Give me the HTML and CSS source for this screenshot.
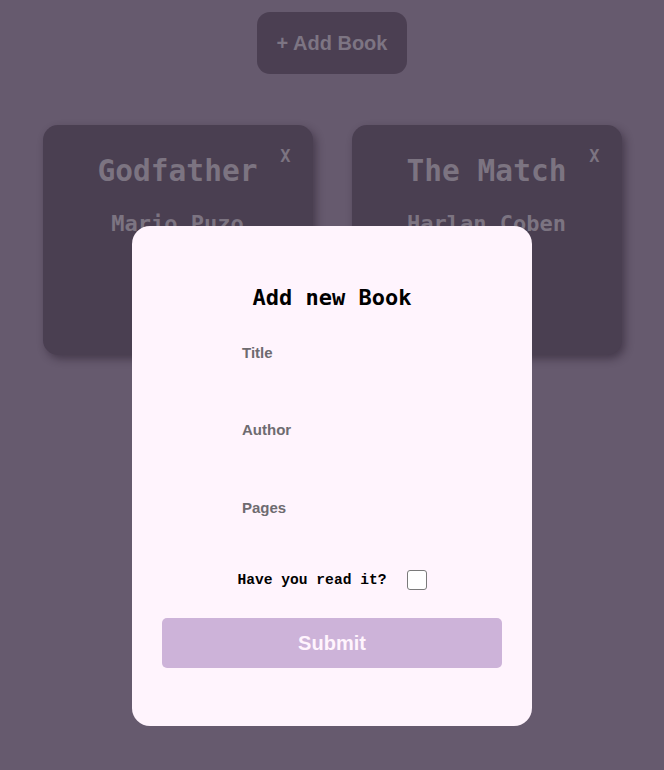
FILE: index.html
```html
<!DOCTYPE html>
<html lang="en">
<head>
<meta charset="utf-8">
<title>Library</title>
<link rel="stylesheet" href="styles.css">
</head>
<body>
  <header class="top">
    <button class="add-btn" type="button">+ Add Book</button>
  </header>
  <main class="books">
    <article class="card">
      <button class="close" type="button">X</button>
      <h2 class="card-title">Godfather</h2>
      <p class="card-author">Mario Puzo</p>
    </article>
    <article class="card">
      <button class="close" type="button">X</button>
      <h2 class="card-title">The Match</h2>
      <p class="card-author">Harlan Coben</p>
    </article>
  </main>
  <div class="modal">
    <h1 class="modal-title">Add new Book</h1>
    <form class="form">
      <div class="fields">
        <div class="field">
          <label class="label" for="title">Title</label>
          <input class="input" id="title" type="text">
        </div>
        <div class="field">
          <label class="label" for="author">Author</label>
          <input class="input" id="author" type="text">
        </div>
        <div class="field field-last">
          <label class="label" for="pages">Pages</label>
          <input class="input" id="pages" type="text">
        </div>
      </div>
      <div class="read-row">
        <span class="read-label">Have you read it?</span>
        <span class="checkbox"></span>
      </div>
      <button class="submit" type="button">Submit</button>
    </form>
  </div>
</body>
</html>
```
FILE: styles.css
```css
html, body {
  margin: 0;
  padding: 0;
}
body {
  background: #665a6e;
  min-height: 770px;
  font-family: "Liberation Sans", Arial, sans-serif;
}
.top {
  display: flex;
  justify-content: center;
  padding-top: 12px;
}
.add-btn {
  width: 150px;
  height: 62px;
  border: none;
  border-radius: 13px;
  background: #4b3f52;
  color: #7d7583;
  font-family: "Liberation Sans", Arial, sans-serif;
  font-weight: bold;
  font-size: 20px;
  padding: 0;
}
.books {
  display: flex;
  justify-content: center;
  gap: 39px;
  margin-top: 51px;
}
.card {
  position: relative;
  width: 270px;
  height: 230px;
  box-sizing: border-box;
  background: #4a3f51;
  border-radius: 15px;
  box-shadow: 3px 4px 8px rgba(30, 20, 35, 0.45);
  padding-top: 29px;
  text-align: center;
  font-family: "DejaVu Sans Mono", monospace;
  color: #7c7481;
}
.card-title {
  margin: 0;
  font-size: 29.5px;
  line-height: 35px;
  font-weight: bold;
}
.card-author {
  margin: 22px 0 0;
  font-size: 22px;
  line-height: 26px;
  font-weight: bold;
}
.close {
  position: absolute;
  top: 21px;
  right: 22px;
  border: none;
  background: none;
  padding: 0;
  font-family: "DejaVu Sans Mono", monospace;
  font-weight: bold;
  font-size: 17px;
  line-height: 20px;
  color: #7c7481;
}
.modal {
  position: fixed;
  top: 226px;
  left: 132px;
  width: 400px;
  height: 500px;
  box-sizing: border-box;
  background: #fff4fd;
  border-radius: 18px;
  padding-top: 59px;
}
.modal-title {
  margin: 0;
  text-align: center;
  font-family: "DejaVu Sans Mono", monospace;
  font-size: 22px;
  line-height: 26px;
  font-weight: bold;
  color: #000;
}
.form {
  display: flex;
  flex-direction: column;
  align-items: center;
}
.fields {
  width: 180px;
  margin-top: 32.5px;
  display: flex;
  flex-direction: column;
}
.field {
  display: flex;
  flex-direction: column;
  height: 77.5px;
}
.field-last {
  height: 71.5px;
}
.label {
  font-size: 15px;
  line-height: 17px;
  font-weight: bold;
  color: #6e6b70;
}
.input {
  border: none;
  background: transparent;
  height: 36px;
  margin-top: 4px;
  padding: 0;
  outline: none;
}
.read-row {
  display: flex;
  align-items: center;
  gap: 21px;
  height: 20px;
  padding-left: 1px;
}
.read-label {
  font-family: "Liberation Mono", "Courier New", monospace;
  font-weight: bold;
  font-size: 14.6px;
  color: #000;
}
.checkbox {
  width: 18px;
  height: 18px;
  border: 1px solid #7a7a7a;
  border-radius: 3px;
  background: #fff;
}
.submit {
  margin-top: 28px;
  width: 340px;
  height: 50px;
  border: none;
  border-radius: 5px;
  background: #cdb3d9;
  color: #fff4fd;
  font-family: "Liberation Sans", Arial, sans-serif;
  font-weight: bold;
  font-size: 20px;
  padding: 0;
}
```
